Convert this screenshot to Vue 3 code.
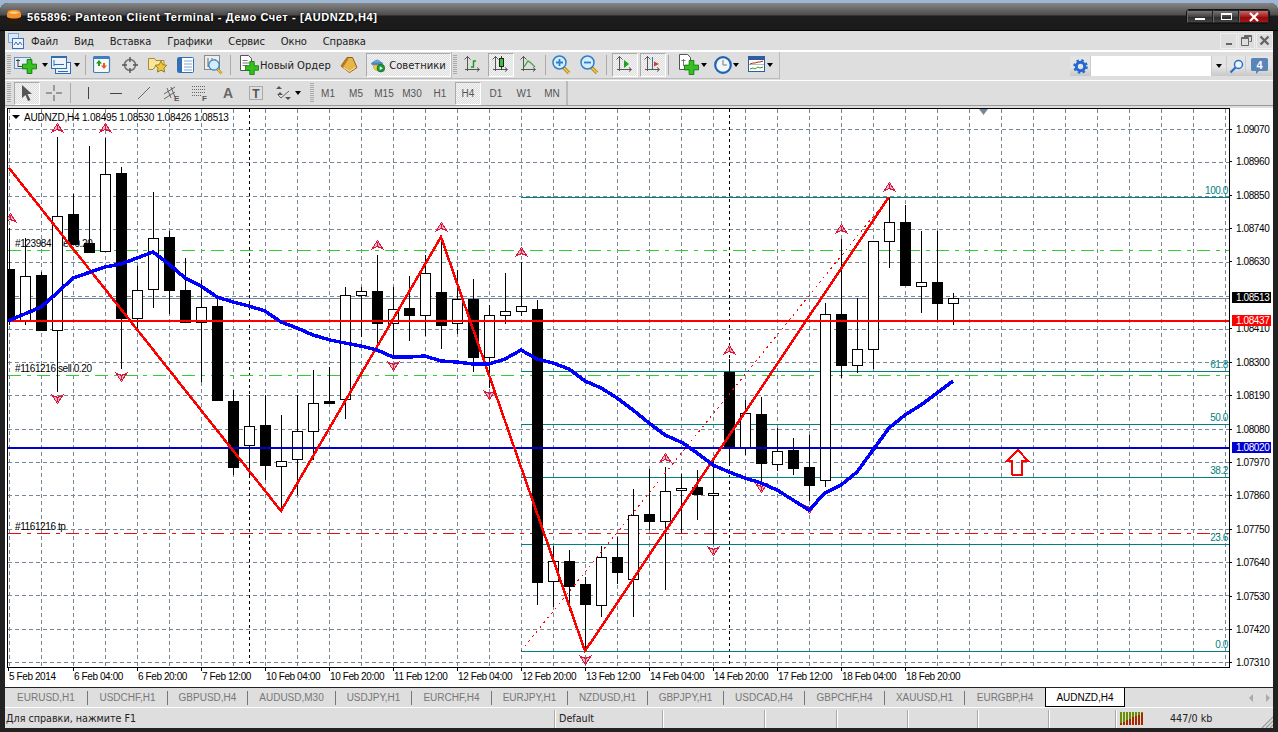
<script setup>
const gridX = Array.from({ length: 39 }, (_, i) => 9 + 32 * i)
const gridY = Array.from({ length: 17 }, (_, i) => Math.round(129 + 33.31 * i))

// hi, body top, body bottom, lo, black
const raw = [
  [228,269,320,325,1],[238,276,321,325,0],[272,275,330,330,1],[137,216,330,392,0],[194,214,244,244,1],
  [146,243,252,252,1],[138,174,251,251,0],[167,173,318,369,1],[266,290,318,332,0],[192,238,289,308,0],
  [231,237,290,314,1],[258,290,322,322,1],[280,307,322,382,0],[298,306,400,400,1],[390,401,467,475,1],
  [395,426,445,475,0],[395,425,465,480,1],[415,461,466,510,0],[395,431,459,495,0],[370,403,431,460,0],
  [367,401,403,403,1],[287,295,399,419,0],[287,291,295,337,0],[255,291,323,343,1],[287,309,323,357,0],
  [276,308,315,341,1],[255,273,315,336,0],[235,292,325,349,1],[270,299,323,334,0],[279,299,357,372,1],
  [305,315,357,388,0],[273,311,315,324,0],[262,306,311,316,0],[300,309,582,605,1],[546,561,581,607,0],
  [550,561,586,611,1],[577,584,604,651,1],[546,557,605,617,0],[537,557,572,584,1],[489,515,579,617,0],
  [469,514,521,530,1],[467,491,521,590,0],[474,488,490,533,0],[470,487,494,520,1],[457,493,495,544,0],
  [359,372,447,465,1],[400,413,448,455,0],[397,414,463,481,1],[428,451,464,471,0],[438,450,468,475,1],
  [435,467,485,501,1],[303,314,480,487,0],[239,314,365,378,1],[298,349,365,373,0],[241,241,349,369,0],
  [198,222,241,268,0],[205,222,285,285,1],[231,282,286,313,0],[231,282,303,321,1],[293,298,303,325,0]
]
const candles = raw.map((r, i) => ({ x: 9 + 16 * i, hi: r[0], top: r[1], bot: r[2], lo: r[3], black: r[4] === 1 }))

const ma = '8,321 41,307 57,293 73,278 105,267 121,264 137,258 153,252 169,264 185,278 201,286 217,297 233,302 249,306 265,311 281,322 297,328 313,335 330,340 345,343 361,346 377,350 393,357 409,357 425,356 441,361 457,362 473,364 489,364 505,359 521,350 537,359 553,363 569,369 585,381 601,388 617,398 633,410 649,423 665,435 683,443 697,453 713,465 729,472 745,478 761,483 777,490 793,500 809,510 825,493 841,485 857,472 873,450 889,428 905,415 921,405 937,393 953,381'

const upArrows = [[10,218],[57,128],[105,128],[377,245],[441,227],[521,252],[665,458],[729,350],[841,229],[889,187]]
const downArrows = [[57,399],[121,377],[393,366],[489,395],[585,660],[713,551],[761,488],[809,509]]

const fibs = [
  { y: 197, t: '100.0' }, { y: 371, t: '61.8' }, { y: 424, t: '50.0' },
  { y: 477, t: '38.2' }, { y: 544, t: '23.6' }, { y: 651, t: '0.0' }
]
const prices = [
  [129,'1.09070'],[161,'1.08960'],[195,'1.08850'],[228,'1.08740'],[261,'1.08630'],[328,'1.08410'],
  [362,'1.08300'],[395,'1.08190'],[429,'1.08080'],[462,'1.07970'],[495,'1.07860'],[529,'1.07750'],
  [562,'1.07640'],[596,'1.07530'],[629,'1.07420'],[662,'1.07310']
]
const tags = [
  { y: 297, t: '1.08513', c: '#000' }, { y: 320, t: '1.08437', c: '#f00' }, { y: 447, t: '1.08020', c: '#0000d0' }
]
const dates = [
  [8,'5 Feb 2014'],[73,'6 Feb 04:00'],[137,'6 Feb 20:00'],[201,'7 Feb 12:00'],[265,'10 Feb 04:00'],
  [329,'10 Feb 20:00'],[393,'11 Feb 12:00'],[457,'12 Feb 04:00'],[521,'12 Feb 20:00'],[585,'13 Feb 12:00'],
  [649,'14 Feb 04:00'],[713,'14 Feb 20:00'],[777,'17 Feb 12:00'],[841,'18 Feb 04:00'],[905,'18 Feb 20:00']
]
const tabs = [
  ['EURUSD,H1',83],['USDCHF,H1',80],['GBPUSD,H4',80],['AUDUSD,M30',88],['USDJPY,H1',76],['EURCHF,H4',80],
  ['EURJPY,H1',76],['NZDUSD,H1',80],['GBPJPY,H1',76],['USDCAD,H4',81],['GBPCHF,H4',80],['XAUUSD,H1',80],['EURGBP,H4',81]
]
const periods = ['M1','M5','M15','M30','H1','H4','D1','W1','MN']
const menu = ['Файл','Вид','Вставка','Графики','Сервис','Окно','Справка']
const statusCells = [108,102,72,71,70,71,67]
const signal = Array.from({ length: 8 }, (_, i) => ({ x: i * 3, red: 2 + i * 1.4 }))
</script>

<template>
  <div class="window">
    <svg class="defs" aria-hidden="true">
      <defs>
        <symbol id="plus" viewBox="0 0 16 16">
          <path d="M5.5 .5h5v5h5v5h-5v5h-5v-5h-5v-5h5z" fill="#35c21c" stroke="#127a12" />
        </symbol>
        <symbol id="glass" viewBox="0 0 20 20">
          <path d="M11 12l6 6" stroke="#b8860b" stroke-width="3.4" />
          <path d="M11.5 12.500l5.500 5.500" stroke="#f4cf62" stroke-width="1.4" />
          <circle cx="7.500" cy="7.500" r="6.500" fill="#d5ecfb" stroke="#2f7fc8" stroke-width="1.500" />
        </symbol>
        <symbol id="axes" viewBox="0 0 16 18">
          <path d="M3.500 1v15M.5 4.500l3-3 3 3M1 14.500h14M13 12.500l2.500 2-2.500 2" fill="none" stroke="#555" />
        </symbol>
      </defs>
    </svg>

    <header class="titlebar">
      <svg class="app-icon" width="16" height="16" viewBox="0 0 16 16">
        <rect x="1" y="1" width="14" height="14" rx="4" fill="#2a1a0c" />
        <path d="M1 8V5a4 4 0 0 1 4-4h6a4 4 0 0 1 4 4v3c-4 2-10 2-14 0z" fill="#f2922c" />
        <path d="M3 4c1-2 9-2 10 0-2 1-8 1-10 0z" fill="#fcd18c" />
      </svg>
      <span class="title">565896: Panteon Client Terminal - Демо Счет - [AUDNZD,H4]</span>
      <div class="win-btns">
        <button class="wb"><i class="wb-min"></i></button>
        <button class="wb"><i class="wb-max"></i></button>
        <button class="wb wb-close">
          <svg width="12" height="10" viewBox="0 0 12 10"><path d="M2 1l8 8M10 1l-8 8" stroke="#fff" stroke-width="2.200" /></svg>
        </button>
      </div>
    </header>

    <main class="client">
      <nav class="menubar">
        <svg class="menu-icon" width="16" height="16" viewBox="0 0 16 16">
          <rect x=".5" y=".5" width="10" height="9" fill="#dbe8f7" stroke="#7fa5d6" />
          <rect x="4.500" y="5.500" width="11" height="10" fill="#eef4fb" stroke="#3d6fb8" />
          <path d="M6 12l2-3 2 3 2-3 2 3" fill="none" stroke="#3d6fb8" />
        </svg>
        <span v-for="m in menu" :key="m" class="menu-item">{{ m }}</span>
        <div class="mdi">
          <span class="mdi-btn"><i class="mdi-min"></i></span>
          <span class="mdi-btn">
            <svg width="11" height="11" viewBox="0 0 11 11"><path d="M3.500 2.500V.5h7v6h-2M.5 2.500h7v8h-7z" fill="none" stroke="#666" /><path d="M.5 3.500h7M3.500 1.500h7" stroke="#666" /></svg>
          </span>
          <span class="mdi-btn">
            <svg width="11" height="11" viewBox="0 0 11 11"><path d="M1.500 1.500l8 8M9.500 1.500l-8 8" stroke="#666" stroke-width="2.400" /></svg>
          </span>
        </div>
      </nav>

      <div class="tool-row">
        <div class="toolbar tb-a">
          <span class="grip"></span>
          <button class="tb w38">
            <svg width="26" height="20" viewBox="0 0 26 20">
              <rect x="1.500" y="2.500" width="16" height="11" fill="#e6eef8" stroke="#5f8fc4" />
              <path d="M5 4v8M3 5.500h4M5 11.500h9" fill="none" stroke="#444" />
              <use href="#plus" x="9" y="4" width="15" height="15" />
            </svg>
            <i class="caret"></i>
          </button>
          <button class="tb w38">
            <svg width="20" height="20" viewBox="0 0 20 20">
              <rect x="4.500" y="7.500" width="15" height="11" fill="#eef4fb" stroke="#2f6db0" />
              <rect x=".5" y="1.500" width="15" height="12" fill="#eef4fb" stroke="#2f6db0" />
              <path d="M.5 2.500h15M3 5v6M3 9.500h10M7 16.500h10" stroke="#2f6db0" />
            </svg>
            <i class="caret"></i>
          </button>
          <i class="sep"></i>
          <button class="tb">
            <svg width="18" height="18" viewBox="0 0 18 18">
              <rect x=".5" y=".5" width="16" height="16" rx="1.500" fill="#f8f8f4" stroke="#3b7ec2" stroke-width="1.200" />
              <path d="M1 2h15" stroke="#3b7ec2" stroke-width="2" />
              <path d="M6 4l3 3.500H7V10H5V7.500H3z" fill="#1e9a1e" />
              <path d="M11 13l-3-3.500h2V7h2v2.500h2z" fill="#e4572e" />
            </svg>
          </button>
          <button class="tb">
            <svg width="18" height="18" viewBox="0 0 18 18">
              <circle cx="9" cy="9" r="5.500" fill="none" stroke="#707070" stroke-width="1.500" />
              <path d="M9 1v5M9 12v5M1 9h5M12 9h5" stroke="#555" stroke-width="1.400" />
            </svg>
          </button>
          <button class="tb">
            <svg width="20" height="20" viewBox="0 0 20 20">
              <path d="M.5 3.500h6l1.500 2h8v5H8l-3 4H.5z" fill="#fbe59a" stroke="#a58a3a" />
              <path d="M13 6l1.800 3.700 4 .6-2.900 2.800.7 4-3.600-1.900-3.600 1.900.7-4-2.900-2.800 4-.6z" fill="#f0c63a" stroke="#9b7f22" />
            </svg>
          </button>
          <button class="tb">
            <svg width="18" height="18" viewBox="0 0 18 18">
              <rect x=".5" y="1.500" width="16" height="15" rx="1" fill="#fff" stroke="#2d72b8" />
              <rect x="1" y="2" width="4" height="14" fill="#2d72b8" />
              <path d="M7 5h8M7 8h8M7 11h8M7 14h8" stroke="#7fa8d4" />
              <path d="M3 5v1M3 9v1" stroke="#e33" />
            </svg>
          </button>
          <button class="tb">
            <svg width="20" height="20" viewBox="0 0 20 20">
              <rect x=".5" y=".5" width="15" height="14" fill="#eee" stroke="#8a8a8a" />
              <path d="M4 3v9M4 11h9M8 3v6M11 4v5" stroke="#666" />
              <use href="#glass" x="4" y="4" width="16" height="16" />
            </svg>
          </button>
          <i class="sep"></i>
          <button class="tb tb-text order">
            <svg width="20" height="20" viewBox="0 0 20 20">
              <path d="M1.500 .5h8l3 3v12h-11z" fill="#fff" stroke="#555" />
              <path d="M3.500 5.500h5M3.500 8h7M3.500 10.500h5" stroke="#777" />
              <use href="#plus" x="6" y="6" width="14" height="14" />
            </svg>
            <span>Новый Ордер</span>
          </button>
          <button class="tb">
            <svg width="18" height="18" viewBox="0 0 18 18">
              <path d="M7 1.500h5.500L17 11.500 9.500 16.500 1 10z" fill="#e7b64a" stroke="#8c5e16" />
              <path d="M7 1.500L1 10l2 1.500L8.500 3z" fill="#b97a22" />
              <path d="M3.500 11.500l6 4 6-4" fill="none" stroke="#fbe2a4" />
            </svg>
          </button>
          <button class="tb tb-text pressed experts">
            <svg width="19" height="19" viewBox="0 0 19 19">
              <ellipse cx="8" cy="7" rx="8" ry="3" fill="#4a90c8" />
              <path d="M3 6c1-5 9-5 10 0z" fill="#6aa8d8" stroke="#2e6e9e" stroke-width=".5" />
              <path d="M3 9h10c0 5-2 7-5 7s-5-2-5-7z" fill="#f0c840" stroke="#9b7f22" stroke-width=".5" />
              <circle cx="13" cy="13" r="5" fill="#1d9a3a" stroke="#0e6b22" />
              <path d="M11.500 10.500l4 2.500-4 2.500z" fill="#fff" />
            </svg>
            <span>Советники</span>
          </button>
        </div>

        <div class="toolbar tb-b">
          <span class="grip"></span>
          <button class="tb">
            <svg width="18" height="20" viewBox="0 0 18 20"><use href="#axes" width="16" height="18" /><path d="M7 12h2.500V6H12" fill="none" stroke="#1a9a1a" stroke-width="1.400" /></svg>
          </button>
          <button class="tb pressed pp">
            <svg width="18" height="20" viewBox="0 0 18 20"><use href="#axes" width="16" height="18" /><path d="M9.500 1v14" stroke="#333" /><rect x="7.500" y="3.500" width="4" height="8" fill="#36c536" stroke="#222" /></svg>
          </button>
          <button class="tb">
            <svg width="18" height="20" viewBox="0 0 18 20"><use href="#axes" width="16" height="18" /><path d="M4 12l4-6 3 2 4 4" fill="none" stroke="#4aa04a" stroke-width="1.300" /></svg>
          </button>
          <i class="sep"></i>
          <button class="tb">
            <svg width="20" height="20" viewBox="0 0 20 20"><use href="#glass" width="20" height="20" /><path d="M4 7.500h7M7.500 4v7" stroke="#2f7fc8" stroke-width="1.800" /></svg>
          </button>
          <button class="tb">
            <svg width="20" height="20" viewBox="0 0 20 20"><use href="#glass" width="20" height="20" /><path d="M4 7.500h7" stroke="#2f7fc8" stroke-width="1.800" /></svg>
          </button>
          <i class="sep"></i>
          <button class="tb pressed shift-a">
            <svg width="18" height="20" viewBox="0 0 18 20"><use href="#axes" width="16" height="18" /><path d="M8 5l5 4-5 4z" fill="#1fa01f" /></svg>
          </button>
          <button class="tb pressed shift-b">
            <svg width="18" height="20" viewBox="0 0 18 20"><use href="#axes" width="16" height="18" /><path d="M8.500 2v12" stroke="#2f6db0" /><path d="M15 9l-5-2.500v5z" fill="#d8401a" /></svg>
          </button>
          <i class="sep sep-end"></i>
          <button class="tb w33">
            <svg width="22" height="22" viewBox="0 0 22 22">
              <path d="M1.500 .5h8l3 3v12h-11z" fill="#fff" stroke="#555" />
              <path d="M5.500 5v7M3.500 6.500h4M5.500 11.500h5" stroke="#777" />
              <use href="#plus" x="6" y="6" width="15" height="15" />
            </svg>
            <i class="caret"></i>
          </button>
          <button class="tb w33">
            <svg width="18" height="18" viewBox="0 0 18 18">
              <circle cx="9" cy="9" r="7.800" fill="#f2f6fa" stroke="#1d66b4" stroke-width="2.200" />
              <path d="M9 4v5h4" fill="none" stroke="#777" />
            </svg>
            <i class="caret"></i>
          </button>
          <button class="tb w33">
            <svg width="18" height="18" viewBox="0 0 18 18">
              <rect x=".5" y=".5" width="16" height="15" fill="#fff" stroke="#2d5f9e" />
              <rect x="1" y="1" width="15" height="3" fill="#2d5f9e" />
              <path d="M1 8.500h15" stroke="#bbb" />
              <path d="M2 8l3-1 2 0 3-1 2 0 3-1" fill="none" stroke="#b03020" />
              <path d="M2 13l3-1 2 1 3-2 2 1 3-1" fill="none" stroke="#3a9a2a" />
            </svg>
            <i class="caret"></i>
          </button>
        </div>

        <div class="search">
          <span class="s-cell s-gear">
            <svg width="15" height="15" viewBox="0 0 15 15">
              <circle cx="7.500" cy="7.500" r="4.200" fill="none" stroke="#2368d0" stroke-width="3" />
              <circle cx="7.500" cy="7.500" r="6.300" fill="none" stroke="#2368d0" stroke-width="2" stroke-dasharray="2.500 2.450" />
            </svg>
          </span>
          <span class="s-input"></span>
          <span class="s-cell s-drop"><i class="caret"></i></span>
          <span class="s-cell s-find">
            <svg width="15" height="15" viewBox="0 0 15 15">
              <circle cx="9.500" cy="5.500" r="4" fill="#eef6ff" stroke="#2a6fca" stroke-width="1.500" />
              <path d="M6.500 8.500L1.500 13.500" stroke="#2a6fca" stroke-width="2.200" />
            </svg>
          </span>
          <span class="s-cell s-chat">
            <svg width="17" height="17" viewBox="0 0 17 17">
              <path d="M1.500 0h14A1.500 1.500 0 0 1 17 1.500v10a1.500 1.500 0 0 1-1.500 1.500H8l-3 3v-3H1.500A1.500 1.500 0 0 1 0 11.500v-10A1.500 1.500 0 0 1 1.500 0z" fill="#5b84b8" />
              <text x="8.500" y="10.500" text-anchor="middle" class="chat-num">4</text>
            </svg>
          </span>
        </div>
      </div>

      <div class="tool-row row2">
        <div class="toolbar tb-c">
          <span class="grip"></span>
          <button class="tb pressed t2 first">
            <svg width="12" height="16" viewBox="0 0 12 16"><path d="M1 0l10 9H6.500l3 6-2.500 1-2.500-6L1 13z" fill="#555" /></svg>
          </button>
          <button class="tb t2">
            <svg width="16" height="16" viewBox="0 0 16 16"><path d="M8 0v6M8 10v6M0 8h6M10 8h6" stroke="#555" /></svg>
          </button>
          <i class="sep"></i>
          <button class="tb t2">
            <svg width="16" height="14" viewBox="0 0 16 14"><path d="M8.500 1v12" stroke="#444" /></svg>
          </button>
          <button class="tb t2">
            <svg width="14" height="4" viewBox="0 0 14 4"><path d="M1 2.500h12" stroke="#444" /></svg>
          </button>
          <button class="tb t2">
            <svg width="16" height="16" viewBox="0 0 16 16"><path d="M2 14L14 2" stroke="#666" /></svg>
          </button>
          <button class="tb t2">
            <svg width="18" height="18" viewBox="0 0 18 18">
              <path d="M1 10l11-7M1 15l11-7M4 4l4 10M8 3l4 10" stroke="#666" fill="none" />
              <text x="11" y="17" class="mini">E</text>
            </svg>
          </button>
          <button class="tb t2">
            <svg width="18" height="18" viewBox="0 0 18 18">
              <path d="M1 2.500h14M1 5.500h14M1 8.500h14M1 11.500h10" stroke="#666" stroke-dasharray="1 1" />
              <text x="11" y="17" class="mini">F</text>
            </svg>
          </button>
          <button class="tb t2 glyph-a">A</button>
          <button class="tb t2">
            <svg width="16" height="16" viewBox="0 0 16 16">
              <rect x="1.500" y="1.500" width="13" height="13" fill="none" stroke="#777" stroke-dasharray="1 1" />
              <text x="8" y="12.500" text-anchor="middle" class="mini t">T</text>
            </svg>
          </button>
          <button class="tb t2 w36">
            <svg width="18" height="16" viewBox="0 0 18 16">
              <path d="M4 1l3 3H1zM5 7l3 3H2zM13 15l-3-3h6z" fill="#555" />
              <path d="M3 10l3 3 8-7" fill="none" stroke="#666" />
            </svg>
            <i class="caret"></i>
          </button>
          <span class="grip g2"></span>
          <button v-for="p in periods" :key="p" class="tb t2 period" :class="{ pressed: p === 'H4' }">{{ p }}</button>
        </div>
      </div>

      <svg class="chart" viewBox="5 106 1268 581" width="1268" height="581" xmlns="http://www.w3.org/2000/svg">
        <defs>
          <clipPath id="plot"><rect x="8" y="109" width="1221" height="558" /></clipPath>
        </defs>
        <rect x="5" y="106" width="1268" height="2" fill="#dedede" />
        <rect x="5" y="108" width="1268" height="579" fill="#fff" />
        <rect x="7" y="108" width="1222" height="559" fill="none" stroke="#000" transform="translate(.5 .5)" shape-rendering="crispEdges" />

        <g clip-path="url(#plot)" shape-rendering="crispEdges">
          <g stroke="#778899" stroke-dasharray="4 3">
            <line v-for="x in gridX" :key="'gx' + x" :x1="x + .5" :x2="x + .5" y1="109" y2="667" />
            <line v-for="y in gridY" :key="'gy' + y" x1="8" x2="1229" :y1="y + .5" :y2="y + .5" />
          </g>
          <line x1="8" x2="1229" y1="298.500" y2="298.500" stroke="#778899" />
          <g stroke="#000" stroke-dasharray="3 3">
            <line x1="249.500" x2="249.500" y1="109" y2="667" />
            <line x1="729.500" x2="729.500" y1="109" y2="667" />
          </g>
          <g stroke="#32cd32" stroke-dasharray="13 6 4 6">
            <line x1="8" x2="1229" y1="250.500" y2="250.500" />
            <line x1="8" x2="1229" y1="375.500" y2="375.500" />
          </g>
          <line x1="8" x2="1229" y1="533.500" y2="533.500" stroke="#e01010" stroke-dasharray="13 6 4 6" />
          <line v-for="f in fibs" :key="f.t" x1="521" x2="1229" :y1="f.y + .5" :y2="f.y + .5" stroke="#008080" />
        </g>

        <g class="chart-text">
          <text x="15" y="247">#1239841 sell 0.20</text>
          <text x="15" y="372">#1161216 sell 0.20</text>
          <text x="15" y="530">#1161216 tp</text>
        </g>

        <g clip-path="url(#plot)" shape-rendering="crispEdges">
          <g v-for="c in candles" :key="c.x">
            <line :x1="c.x + .5" :x2="c.x + .5" :y1="c.hi" :y2="c.lo" stroke="#000" />
            <rect :x="c.x - 4.500" :y="c.top + .5" width="10" :height="c.bot - c.top" :fill="c.black ? '#000' : '#fff'" stroke="#000" />
          </g>
          <line x1="8" x2="1229" y1="321" y2="321" stroke="#f00" stroke-width="2" />
          <line x1="8" x2="1229" y1="448" y2="448" stroke="#0000d0" stroke-width="2" />
          <line x1="521" y1="651" x2="889" y2="197" stroke="#f00" stroke-dasharray="2 4" />
          <g stroke="#dc143c">
            <path v-for="a in upArrows" :key="'u' + a[0]" :transform="`translate(${a[0] + .5} ${a[1]})`" d="M0-4.500L5.500 4 0 1.500-5.500 4zM0-3V1.500" fill="#dc143c" fill-opacity=".3" />
            <path v-for="a in downArrows" :key="'d' + a[0]" :transform="`translate(${a[0] + .5} ${a[1]})`" d="M0 4.500L5.500-4 0-1.500-5.500-4zM0 3V-1.500" fill="#dc143c" fill-opacity=".3" />
          </g>
          <polyline points="9,168 281,511 441,237 585,651 889,197" fill="none" stroke="#f00" stroke-width="2.500" />
          <polyline :points="ma" fill="none" stroke="#0000ff" stroke-width="3.500" />
          <path d="M1012 474.500V461H1007L1018 450 1028 461H1022V474.500H1012" fill="none" stroke="#f00" stroke-width="2" />
        </g>

        <path d="M979 109h9l-4.500 6z" fill="#778899" />
        <path d="M12 115h8l-4 4z" fill="#000" />
        <text x="24" y="121" class="chart-text info">AUDNZD,H4  1.08495 1.08530 1.08426 1.08513</text>

        <g class="chart-text fib-text">
          <text v-for="f in fibs" :key="'t' + f.t" x="1228" :y="f.y - 3" text-anchor="end">{{ f.t }}</text>
        </g>

        <g class="chart-text" shape-rendering="crispEdges">
          <g v-for="p in prices" :key="p[1]">
            <line x1="1230" x2="1232" :y1="p[0] + .5" :y2="p[0] + .5" stroke="#000" />
            <text x="1236" :y="p[0] + 4">{{ p[1] }}</text>
          </g>
          <g v-for="d in dates" :key="d[1]">
            <line :x1="d[0] + .5" :x2="d[0] + .5" y1="668" y2="671" stroke="#000" />
            <text :x="d[0] + 1" y="680">{{ d[1] }}</text>
          </g>
          <g v-for="t in tags" :key="t.t">
            <rect x="1232" :y="t.y - 5" width="39" height="11" :fill="t.c" />
            <text x="1236" :y="t.y + 4" class="tag-text">{{ t.t }}</text>
          </g>
        </g>
      </svg>

      <div class="tabs">
        <span v-for="t in tabs" :key="t[0]" class="tab" :style="{ width: t[1] + 'px' }">{{ t[0] }}</span>
        <span class="tab active">AUDNZD,H4</span>
        <span class="tab-arrows">
          <i class="ta-left"></i>
          <i class="ta-right"></i>
        </span>
      </div>

      <footer class="status">
        <span class="st-help">Для справки, нажмите F1</span>
        <span class="st-cell" :style="{ width: statusCells[0] + 'px' }">Default</span>
        <span v-for="(w, i) in statusCells.slice(1)" :key="i" class="st-cell" :style="{ width: w + 'px' }"></span>
        <span class="st-cell st-last">
          <svg width="24" height="13" viewBox="0 0 24 13" shape-rendering="crispEdges">
            <g v-for="s in signal" :key="s.x">
              <rect :x="s.x" y="0" width="2" :height="13 - s.red" fill="#6b8e00" />
              <rect :x="s.x" :y="13 - s.red" width="2" :height="s.red" fill="#a52a00" />
            </g>
          </svg>
          <span class="kb">447/0 kb</span>
        </span>
        <svg class="sizegrip" width="12" height="12" viewBox="0 0 12 12">
          <path d="M1 12L12 1M5 12l7-7M9 12l3-3" stroke="#999" stroke-width="1.200" />
        </svg>
      </footer>
    </main>
  </div>
</template>

<style>
html, body {
  margin: 0;
  background: #9db6d4;
  overflow: hidden;
}
</style>

<style scoped>
.window {
  position: relative;
  box-sizing: border-box;
  width: 1278px;
  height: 729px;
  margin-top: 3px;
  padding: 0 5px 4px;
  border-radius: 8px 8px 0 0;
  background: #222;
  display: flex;
  flex-direction: column;
  font-family: "Liberation Sans", sans-serif;
  font-size: 11px;
  color: #000;
}
.defs { position: absolute; width: 0; height: 0; }
button {
  font: inherit;
  color: inherit;
  border: 0;
  background: none;
  padding: 0;
}
.titlebar {
  height: 28px;
  margin: 0 -5px;
  padding: 0 5px;
  flex: none;
  display: flex;
  align-items: flex-start;
  border-radius: 8px 8px 0 0;
  background: linear-gradient(#858585 0, #4c4c4c 12px, #1d1d1d 13px, #1a1a1a 27px, #000 27px);
}
.app-icon { margin: 6px 0 0 1px; flex: none; }
.title {
  margin: 8px 0 0 5px;
  font: bold 11px "Liberation Sans", sans-serif;
  letter-spacing: .6px;
  color: #fff;
  text-shadow: 0 0 3px #000;
  white-space: nowrap;
}
.win-btns { margin: 7px 4px 0 auto; display: flex; border-radius: 3px; box-shadow: 0 0 0 1px #111; }
.wb {
  box-sizing: border-box;
  width: 26px;
  height: 13px;
  border: 1px solid #222;
  border-left-color: #666;
  background: linear-gradient(#777, #444 50%, #2a2a2a 51%, #444);
  display: flex;
  align-items: center;
  justify-content: center;
}
.wb-close { width: 30px; background: linear-gradient(#c86a6a, #a81d1d 50%, #8a0c0c 51%, #a81414); }
.wb-min { width: 10px; height: 2px; margin-top: 5px; background: #fff; }
.wb-max { width: 9px; height: 4px; border: 1px solid #fff; border-top-width: 2px; box-sizing: content-box; }

.client { flex: 1; min-height: 0; display: flex; flex-direction: column; background: #dedede; }
.menubar {
  flex: none;
  height: 19px;
  display: flex;
  align-items: center;
  border-bottom: 1px solid #fff;
  font-family: "DejaVu Sans", sans-serif;
  font-size: 10px;
  letter-spacing: -.15px;
  color: #222;
}
.menu-icon { margin: 0 7px 0 3px; flex: none; }
.menu-item { margin-right: 16px; padding-top: 2px; }
.mdi { margin-left: auto; display: flex; gap: 1px; }
.mdi-btn {
  width: 17px;
  height: 16px;
  display: flex;
  align-items: center;
  justify-content: center;
  border: 1px solid #eee;
  box-sizing: border-box;
}
.mdi-min { width: 6px; height: 2px; margin-top: 6px; background: #666; }

.tool-row { flex: none; height: 28px; display: flex; border-top: 1px solid #fff; }
.row2 { height: 24px; border-bottom: 1px solid #999; }
.toolbar {
  box-sizing: border-box;
  height: 27px;
  display: flex;
  align-items: center;
  border-right: 1px solid #bbb;
  border-bottom: 1px solid #bbb;
}
.tb-a { width: 447px; padding-left: 2px; }
.tb-b { width: 328px; padding-left: 1px; }
.tb-c { width: 563px; padding-left: 2px; height: 24px; border-bottom: 0; border-right-width: 2px; }
.grip {
  width: 4px;
  height: 20px;
  flex: none;
  margin-right: 2px;
  background: repeating-linear-gradient(#aaa 0 1px, transparent 1px 2px);
}
.tb {
  position: relative;
  box-sizing: border-box;
  width: 28px;
  height: 24px;
  flex: none;
  display: flex;
  align-items: center;
  justify-content: center;
  font-family: "DejaVu Sans", sans-serif;
  font-size: 10px;
  color: #222;
}
.w38 { width: 35px; gap: 3px; }
.w33 { width: 34px; gap: 1px; }
.tb-text { width: auto; padding: 0 4px; gap: 4px; }
.order { gap: 1px; padding-left: 6px; }
.pressed {
  border: 1px solid;
  border-color: #aaa #fff #fff #aaa;
  background: repeating-conic-gradient(#f4f4f4 0 25%, #dedede 0 50%) 0 0 / 2px 2px;
}
.experts { width: 85px; margin-left: 3px; }
.pp { width: 26px; margin: 0 1px; }
.shift-a { width: 26px; margin-left: 3px; }
.shift-b { width: 26px; margin-left: 2px; }
.caret {
  display: block;
  width: 0;
  height: 0;
  border: 3px solid transparent;
  border-top: 4px solid #000;
  border-bottom: 0;
}
.sep { width: 1px; height: 20px; margin: 0 2px; flex: none; background: #aaa; }
.sep-end { margin-right: 6px; }
.tb-c .sep { margin-right: 3px; }

.search {
  margin: 4px 1px 0 auto;
  height: 20px;
  display: flex;
  background: #ccc;
  gap: 1px;
  align-self: flex-start;
}
.s-cell {
  height: 20px;
  display: flex;
  align-items: center;
  justify-content: center;
  background: linear-gradient(#e4e4e4, #e4e4e4 55%, #c8c8c8);
}
.s-gear { width: 20px; }
.s-input { width: 120px; background: #fff; }
.s-drop { width: 14px; }
.s-find { width: 18px; }
.s-chat { width: 26px; }
.chat-num { font: bold 11px "Liberation Sans", sans-serif; fill: #fff; }

.t2 { width: 28px; height: 23px; }
.t2.w36 { width: 36px; gap: 2px; }
.first { width: 26px; margin-left: 1px; }
.mini { font: bold 8px "Liberation Sans", sans-serif; fill: #555; }
.mini.t { font-size: 12px; }
.glyph-a { font: bold 14px "Liberation Sans", sans-serif; color: #666; }
.g2 { margin: 0 0 0 4px; }
.period { font-family: "Liberation Sans", sans-serif; font-size: 10px; color: #555; }
.period.pressed { width: 26px; margin: 0 1px; }

.chart { display: block; flex: none; }
.chart-text { font: 10px "Liberation Sans", sans-serif; letter-spacing: -.4px; fill: #000; white-space: pre; }
.info { letter-spacing: -.2px; }
.fib-text { fill: #008080; }
.chart-text .tag-text { fill: #fff; }

.tabs {
  flex: none;
  box-sizing: border-box;
  height: 21px;
  display: flex;
  align-items: center;
  border-top: 1px solid #222;
  border-bottom: 1px solid #fff;
  font-family: "Liberation Sans", sans-serif;
  font-size: 10px;
  color: #777;
}
.tab {
  box-sizing: border-box;
  height: 14px;
  line-height: 14px;
  text-align: center;
  border-right: 1px solid #777;
  flex: none;
}
.tab.active {
  width: 80px;
  height: 19px;
  line-height: 19px;
  align-self: flex-start;
  background: #fff;
  color: #000;
  border: 1px solid #000;
  border-top: 0;
  border-width: 0 1px 1px;
  margin-left: -1px;
}
.tab-arrows { margin-left: auto; display: flex; gap: 13px; padding-right: 3px; }
.ta-left { border: 4px solid transparent; border-right: 4px solid #aaa; border-left: 0; }
.ta-right { border: 4px solid transparent; border-left: 4px solid #aaa; border-right: 0; }

.status {
  flex: 1;
  position: relative;
  display: flex;
  align-items: center;
  padding-top: 1px;
  font-family: "DejaVu Sans", sans-serif;
  font-size: 9.6px;
  color: #222;
}
.st-help { width: 549px; padding-left: 1px; box-sizing: border-box; flex: none; }
.st-cell {
  box-sizing: border-box;
  flex: none;
  height: 18px;
  line-height: 18px;
  padding-left: 4px;
  border-left: 1px solid #aaa;
  box-shadow: inset 1px 0 #fff;
}
.st-last { width: 150px; display: flex; align-items: center; }
.kb { margin-left: 26px; }
.sizegrip { position: absolute; right: 0; bottom: 0; }
</style>
